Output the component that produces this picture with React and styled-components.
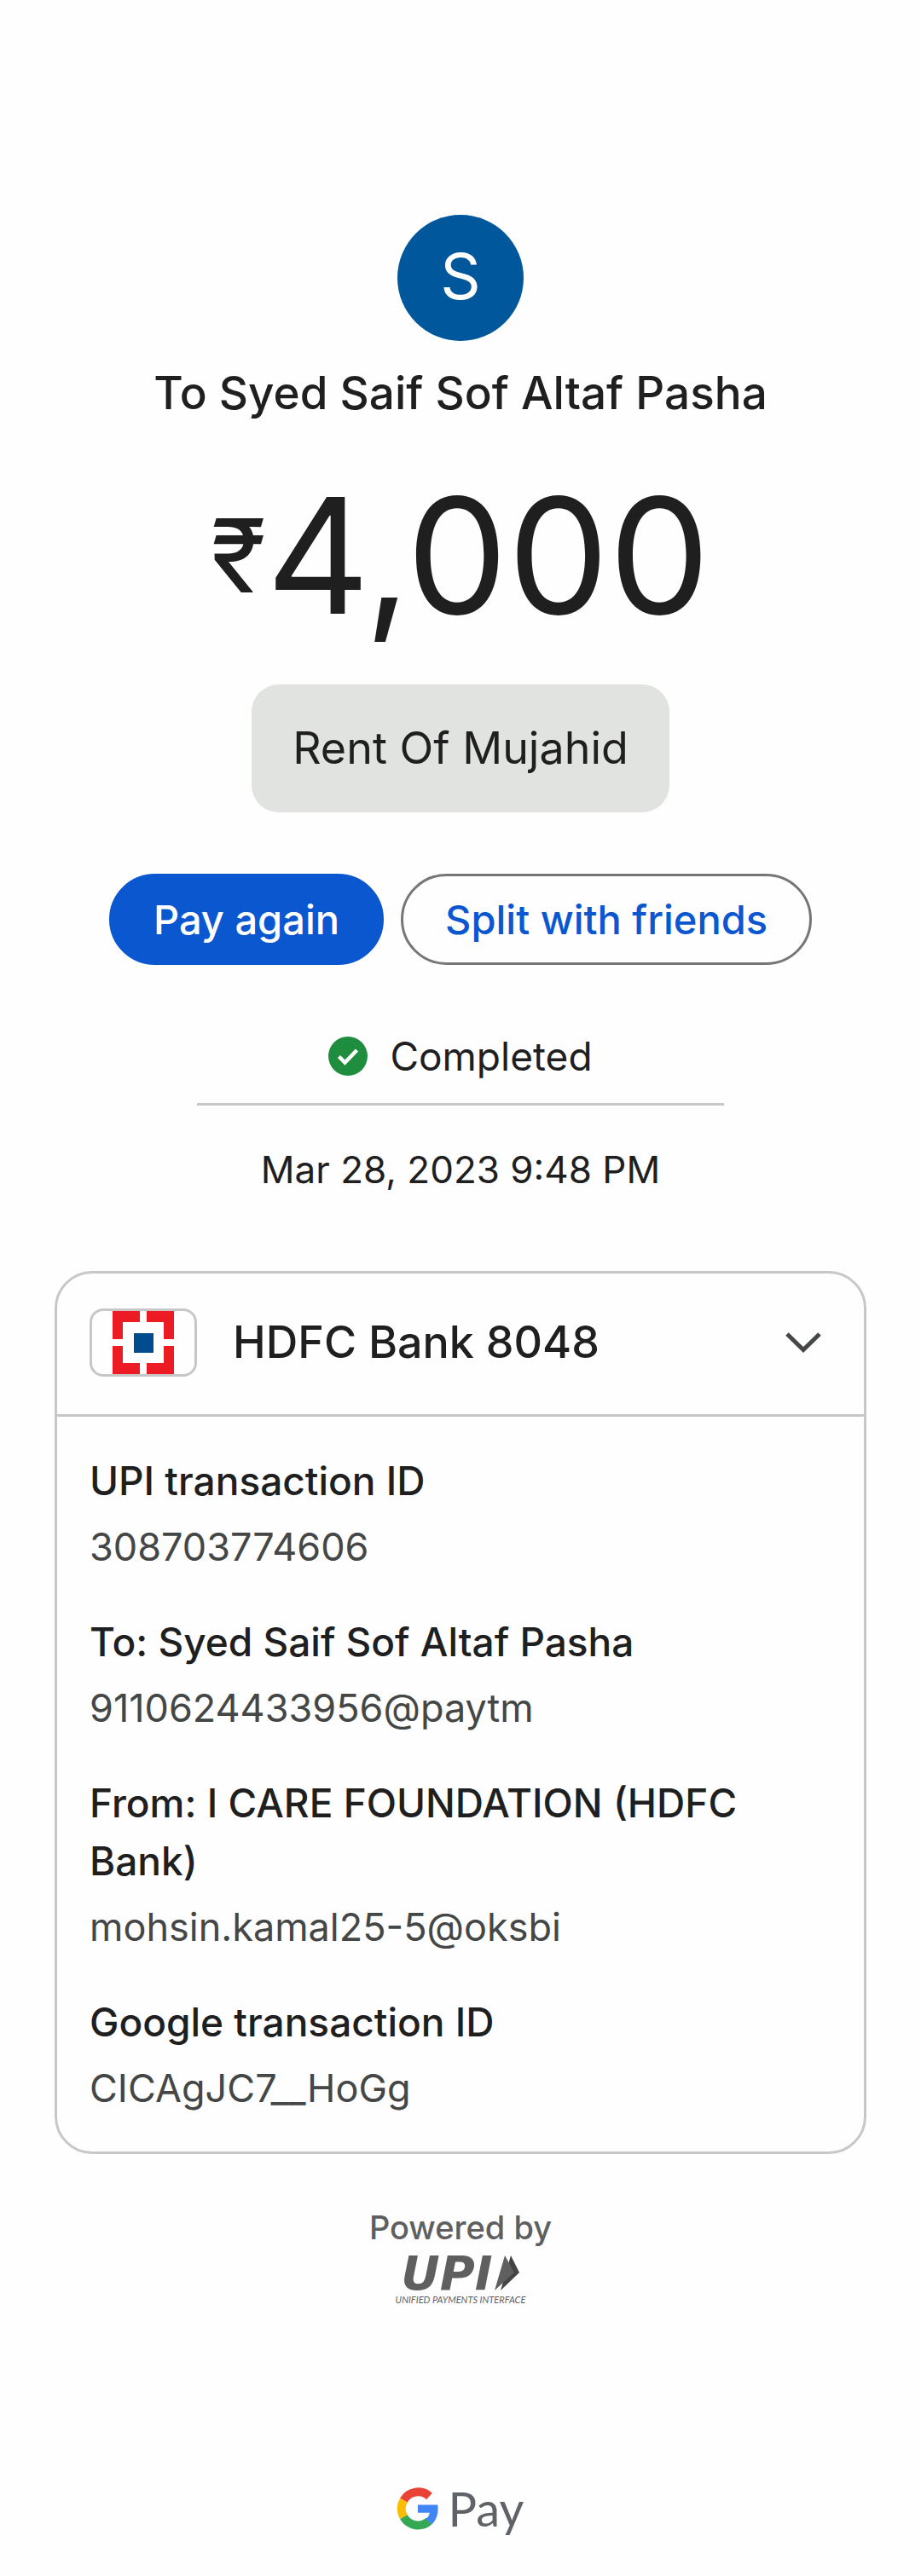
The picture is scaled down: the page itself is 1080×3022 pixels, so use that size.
import React, { useState } from "react";
import styled, { createGlobalStyle } from "styled-components";

const GlobalStyle = createGlobalStyle`
    * {
        box-sizing: border-box;
    }
    body {
        margin: 0;
        background-color: #fefefe;
        color: #1f1f1f;
        font-family: "Inter", "Roboto", sans-serif;
        font-size: 46px;
        line-height: 68px;
    }
    h1, h2, p, dl, dt, dd {
        margin: 0;
        font-size: inherit;
        font-weight: inherit;
    }
    button {
        font: inherit;
        cursor: pointer;
    }
`;

const Page = styled.main`
    display: flex;
    flex-direction: column;
    align-items: center;
    padding: 252px 64px 44px;
`;

const Avatar = styled.div`
    display: flex;
    align-items: center;
    justify-content: center;
    width: 148px;
    height: 148px;
    padding-bottom: 4px;
    border-radius: 50%;
    background-color: #00579c;
    color: #fff;
    font-size: 74px;
`;

const PayeeName = styled.h1`
    margin-top: 27px;
    font-size: 53px;
    font-weight: 500;
    text-align: center;
`;

const Amount = styled.p`
    display: flex;
    align-items: center;
    margin-top: 57px;
    font-size: 188px;
    line-height: 200px;
`;

const Currency = styled.span`
    font-size: 120px;
`;

const Note = styled.p`
    margin-top: 51px;
    padding: 41px 48px;
    border-radius: 32px;
    background-color: #e1e3e0;
    font-size: 52px;
`;

const ButtonRow = styled.div`
    display: flex;
    gap: 20px;
    margin-top: 72px;
`;

const PillButton = styled.button`
    height: 107px;
    padding: 0 49px;
    border: 3px solid ${({$primary}) => ($primary ? "#0b57d0" : "#747775")};
    border-radius: 54px;
    background-color: ${({$primary}) => ($primary ? "#0b57d0" : "transparent")};
    color: ${({$primary}) => ($primary ? "#fff" : "#0b57d0")};
    font-size: 47px;
    font-weight: 500;
    white-space: nowrap;
`;

const Status = styled.div`
    display: flex;
    align-items: center;
    justify-content: center;
    gap: 26px;
    width: 65%;
    margin-top: 73px;
    padding-bottom: 21px;
    border-bottom: 3px solid #c7c7c7;
`;

const DateText = styled.p`
    margin-top: 41px;
    font-size: 44px;
`;

const Card = styled.section`
    align-self: stretch;
    margin-top: 85px;
    border: 3px solid #c7c7c7;
    border-radius: 44px;
`;

const CardHeader = styled.button`
    display: flex;
    align-items: center;
    gap: 42px;
    width: 100%;
    padding: 41px 50px 44px 38px;
    border: 0;
    background: none;
    color: inherit;
    font-size: 52px;
    font-weight: 500;
    text-align: left;
`;

const BankLogo = styled.span`
    display: flex;
    justify-content: center;
    align-items: center;
    width: 126px;
    height: 80px;
    border: 3px solid #c7c7c7;
    border-radius: 16px;
`;

const BankName = styled.span`
    flex: 1;
`;

const Details = styled.dl`
    display: flex;
    flex-direction: column;
    gap: 43px;
    padding: 41px 38px 40px;
    border-top: 3px solid #c7c7c7;
`;

const DetailLabel = styled.dt`
    font-weight: 500;
`;

const DetailValue = styled.dd`
    margin-top: 10px;
    color: #444746;
    font-size: 45px;
`;

const Powered = styled.div`
    display: flex;
    flex-direction: column;
    align-items: center;
    margin-top: 62px;
    color: #5f5f5f;
`;

const PoweredText = styled.p`
    font-size: 38px;
    font-weight: 500;
    line-height: 48px;
`;

const UpiMark = styled.div`
    display: flex;
    align-items: center;
    gap: 2px;
    margin-top: 6px;
    font-family: "DejaVu Sans", sans-serif;
    font-size: 56px;
    font-weight: 700;
    font-style: italic;
    line-height: 48px;
`;

const UpiCaption = styled.p`
    font-family: "Lato", sans-serif;
    font-size: 11px;
    font-style: italic;
    line-height: 14px;
`;

const PayLogo = styled.footer`
    display: flex;
    align-items: center;
    gap: 12px;
    margin-top: 204px;
    color: #5f6368;
    font-family: "Lato", sans-serif;
    font-size: 56px;
`;

const details = [
    {label: "UPI transaction ID", value: "308703774606"},
    {label: "To: Syed Saif Sof Altaf Pasha", value: "9110624433956@paytm"},
    {label: "From: I CARE FOUNDATION (HDFC Bank)", value: "mohsin.kamal25-5@oksbi"},
    {label: "Google transaction ID", value: "CICAgJC7__HoGg"},
];

const CheckIcon = () => (
    <svg width="46" height="46" viewBox="0 0 46 46" aria-hidden="true">
        <circle cx="23" cy="23" r="23" fill="#1e8e3e"/>
        <path d="M12.5 23.5 L19.5 30.5 L33.5 16" fill="none" stroke="#fff" strokeWidth="4.5"/>
    </svg>
);

const HdfcIcon = () => (
    <svg width="72" height="74" viewBox="0 0 72 74" aria-hidden="true">
        <path
            fill="#ed1c24"
            d="M0 0H32V13H12V33H0Z M40 0H72V33H60V13H40Z M0 41H12V61H32V74H0Z M60 41H72V74H40V61H60Z"
        />
        <rect x="25" y="26" width="23" height="23" fill="#004c8f"/>
    </svg>
);

const ChevronIcon = () => (
    <svg width="42" height="26" viewBox="0 0 42 26" aria-hidden="true">
        <path d="M2 3 L21 21.5 L40 3" fill="none" stroke="#444746" strokeWidth="5"/>
    </svg>
);

const UpiArrow = () => (
    <svg width="30" height="42" viewBox="0 0 30 42" aria-hidden="true">
        <path d="M19 0L29 20L7 41Z" fill="#434544"/>
        <path d="M12 0L23 20L0 41Z" fill="#5f5f5f"/>
    </svg>
);

const GoogleIcon = () => (
    <svg width="48" height="50" viewBox="0 0 48 50" aria-hidden="true">
        <g fill="none" strokeWidth="10">
            <path d="M37.5 10.5A19.5 19.5 0 0 0 7.4 15.2" stroke="#ea4335"/>
            <path d="M7.4 15.2A19.5 19.5 0 0 0 7.4 34.8" stroke="#fbbc04"/>
            <path d="M7.4 34.8A19.5 19.5 0 0 0 37.2 39.5" stroke="#34a853"/>
        </g>
        <path d="M24 20.5H47.2C48.4 29.5 46.5 37.5 40.5 43.2L33.2 37.3Q37 34.3 38 29.7H24Z" fill="#4285f4"/>
    </svg>
);

export default function App() {
    const [open, setOpen] = useState(true);

    return (
        <Page>
            <GlobalStyle/>
            <Avatar>S</Avatar>
            <PayeeName>To Syed Saif Sof Altaf Pasha</PayeeName>
            <Amount>
                <Currency>₹</Currency>4,000
            </Amount>
            <Note>Rent Of Mujahid</Note>
            <ButtonRow>
                <PillButton type="button" $primary>Pay again</PillButton>
                <PillButton type="button">Split with friends</PillButton>
            </ButtonRow>
            <Status>
                <CheckIcon/>
                Completed
            </Status>
            <DateText>Mar 28, 2023 9:48 PM</DateText>
            <Card>
                <CardHeader type="button" aria-expanded={open} onClick={() => setOpen(!open)}>
                    <BankLogo><HdfcIcon/></BankLogo>
                    <BankName>HDFC Bank 8048</BankName>
                    <ChevronIcon/>
                </CardHeader>
                {open && (
                    <Details>
                        {details.map(({label, value}) => (
                            <div key={label}>
                                <DetailLabel>{label}</DetailLabel>
                                <DetailValue>{value}</DetailValue>
                            </div>
                        ))}
                    </Details>
                )}
            </Card>
            <Powered>
                <PoweredText>Powered by</PoweredText>
                <UpiMark>UPI<UpiArrow/></UpiMark>
                <UpiCaption>UNIFIED PAYMENTS INTERFACE</UpiCaption>
            </Powered>
            <PayLogo>
                <GoogleIcon/>
                Pay
            </PayLogo>
        </Page>
    );
}
